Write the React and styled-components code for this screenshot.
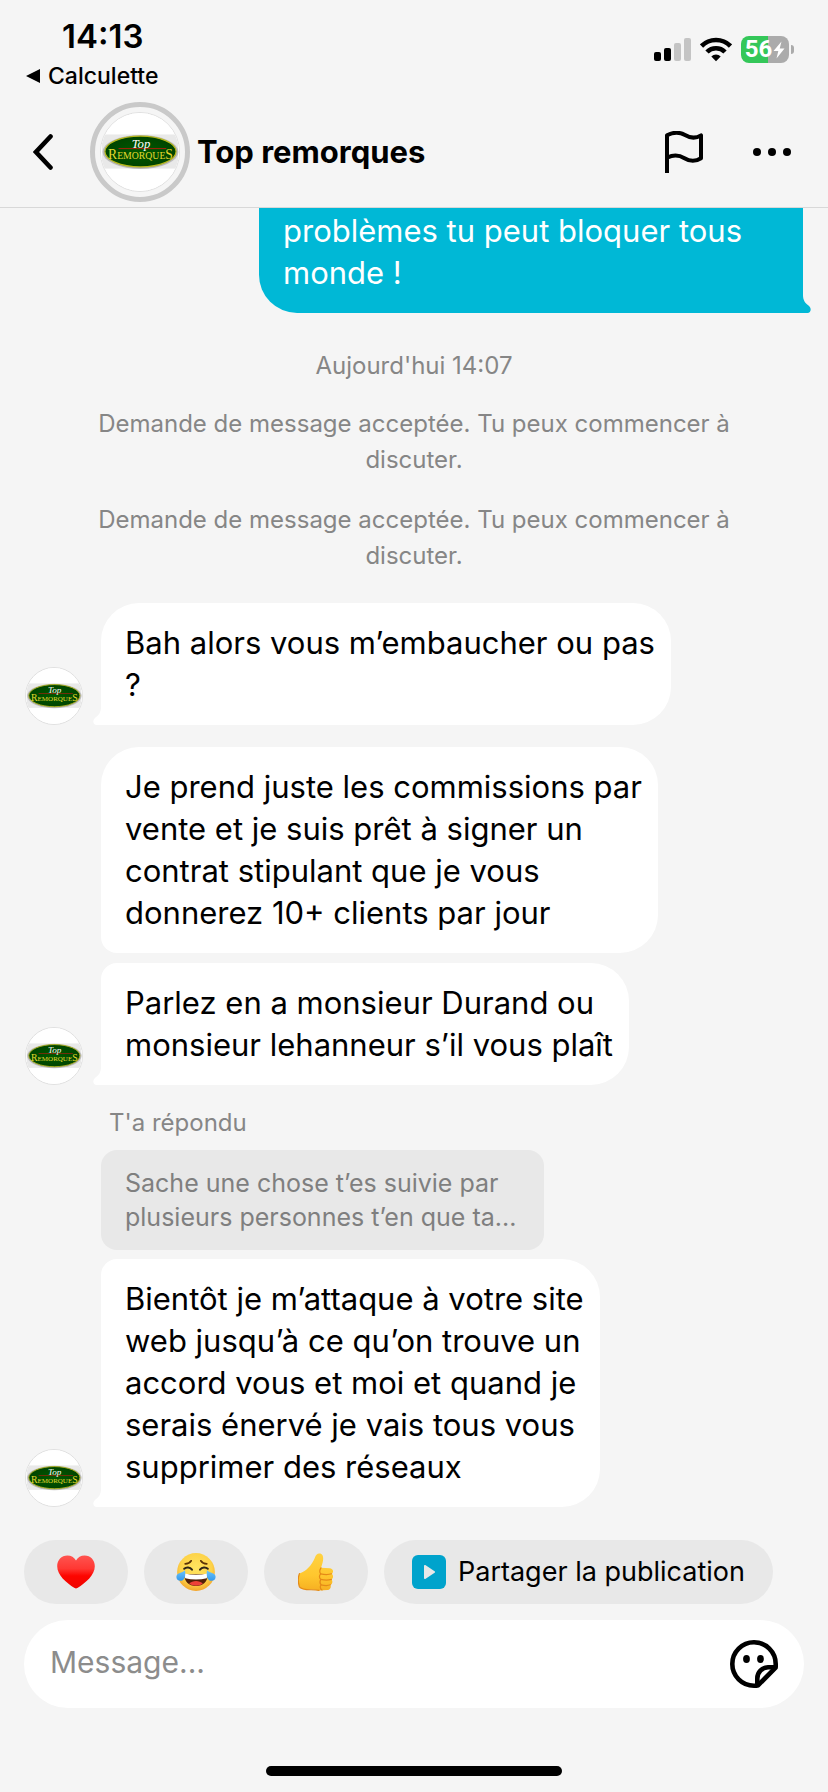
import React from 'react';
import styled, { createGlobalStyle } from 'styled-components';



const messages = [
    {
        id: 1,
        text: 'Bah alors vous m’embaucher ou pas\n?',
        tail: true,
        space: 29,
    },
    {
        id: 2,
        text: 'Je prend juste les commissions par\nvente et je suis prêt à signer un\ncontrat stipulant que je vous\ndonnerez 10+ clients par jour',
        joinBottom: true,
        space: 22,
    },
    {
        id: 3,
        text: 'Parlez en a monsieur Durand ou\nmonsieur lehanneur s’il vous plaît',
        joinTop: true,
        tail: true,
        space: 10,
    },
    {
        id: 4,
        reply: 'Sache une chose t’es suivie par\nplusieurs personnes t’en que ta...',
        text: 'Bientôt je m’attaque à votre site\nweb jusqu’à ce qu’on trouve un\naccord vous et moi et quand je\nserais énervé je vais tous vous\nsupprimer des réseaux',
        joinTop: true,
        tail: true,
        space: 20,
    },
];


const Logo = () => (
    <svg viewBox="0 0 80 80" width="100%" height="100%" role="img" aria-label="Top Remorques">
        <defs>
            <radialGradient id="shade">
                <stop offset="0.7" stopColor="#6f6f6f" />
                <stop offset="1" stopColor="#c4c4c4" />
            </radialGradient>
            <radialGradient id="green">
                <stop offset="0" stopColor="#005a00" />
                <stop offset="1" stopColor="#004400" />
            </radialGradient>
        </defs>
        <rect width="80" height="80" fill="#fff" />
        <rect x="1" y="22" width="78" height="35" fill="#e9e9e9" />
        <ellipse cx="40.5" cy="40" rx="39" ry="17.5" fill="url(#shade)" />
        <ellipse cx="40.5" cy="39.5" rx="36.5" ry="15.8" fill="url(#green)" stroke="#b9b91c" strokeWidth="1.2" />
        <path d="M18 36.5H67" stroke="#a8200d" strokeWidth="1" />
        <text x="41" y="36" textAnchor="middle" fill="#fff" fontFamily="'Liberation Serif', serif" fontStyle="italic" fontSize="13">Top</text>
        <text x="40.5" y="47" textAnchor="middle" fill="#e6d92e" fontFamily="'Liberation Serif', serif" fontSize="10">
            <tspan fontSize="14">R</tspan>EMORQUE<tspan fontSize="14">S</tspan>
        </text>
    </svg>
);

const Tail = () => (
    <svg viewBox="0 0 9 18" width="9" height="18" aria-hidden="true">
        <path d="M8 0C8 5 6 8 2.5 10.5C-1 13 0 18 3.5 18H9V0Z" fill="currentColor" />
    </svg>
);

const WifiIcon = () => (
    <svg viewBox="0 0 32 25" width="32" height="25" aria-hidden="true">
        <g fill="none" stroke="#000" strokeWidth="4.6">
            <path d="M1.5 9A20.5 20.5 0 0 1 30.5 9" />
            <path d="M7 15A12.6 12.6 0 0 1 25 15" />
        </g>
        <path d="M16 24.3L11.3 19.5A6.7 6.7 0 0 1 20.7 19.5Z" fill="#000" />
    </svg>
);

const BoltIcon = () => (
    <svg viewBox="0 0 12 18" width="12" height="18" aria-hidden="true">
        <path d="M8.5 0.5L0.5 10H5.3L3.5 17.5L11.5 7.5H6.7Z" fill="#fff" />
    </svg>
);

const BackIcon = () => (
    <svg viewBox="0 0 20 36" width="20" height="36" aria-hidden="true">
        <path d="M17.5 2.5L3 18L17.5 33.5" fill="none" stroke="#000" strokeWidth="4.6" strokeLinecap="round" />
    </svg>
);

const FlagIcon = () => (
    <svg viewBox="0 0 38 42" width="38" height="42" aria-hidden="true">
        <path d="M2 42V4.2C7 1.7 14 .6 20 4C26 7.6 31 7.4 36 4.4V27.2C31 30.4 25 30.6 19.5 27.2C14 23.8 8 23.6 2.5 26.6" fill="none" stroke="#000" strokeWidth="4" strokeLinejoin="round" />
    </svg>
);

const MoreIcon = () => (
    <svg viewBox="0 0 38 8" width="38" height="8" aria-hidden="true">
        <circle cx="4" cy="4" r="4" />
        <circle cx="19" cy="4" r="4" />
        <circle cx="34" cy="4" r="4" />
    </svg>
);

const HeartEmoji = () => (
    <svg viewBox="0 0 38 34" width="38" height="34" aria-hidden="true">
        <defs>
            <linearGradient id="heart" x1="0" y1="0" x2="0" y2="1">
                <stop offset="0" stopColor="#ff5450" />
                <stop offset="0.4" stopColor="#ff3833" />
                <stop offset="0.62" stopColor="#fd0500" />
                <stop offset="1" stopColor="#ee0500" />
            </linearGradient>
        </defs>
        <path d="M19 5.6C20.6 2.2 24 .4 27.6 .4C33.6 .4 37.8 5 37.8 11.2C37.8 20 29 27.5 20.4 33C19.4 33.6 18.6 33.6 17.6 33C9 27.5 .2 20 .2 11.2C.2 5 4.4 .4 10.4 .4C14 .4 17.4 2.2 19 5.6Z" fill="url(#heart)" />
    </svg>
);

const LaughEmoji = () => (
    <svg viewBox="0 0 40 38" width="40" height="38" aria-hidden="true">
        <defs>
            <radialGradient id="face" cx="0.5" cy="0.4" r="0.6">
                <stop offset="0" stopColor="#ffe561" />
                <stop offset="0.7" stopColor="#fdd247" />
                <stop offset="1" stopColor="#f3a52c" />
            </radialGradient>
            <linearGradient id="tear" x1="0" y1="0" x2="0" y2="1">
                <stop offset="0" stopColor="#6cc4fb" />
                <stop offset="1" stopColor="#3499ec" />
            </linearGradient>
        </defs>
        <circle cx="20" cy="19" r="18.9" fill="url(#face)" />
        <g fill="none" stroke="#5b3206" strokeWidth="1.7" strokeLinecap="round">
            <path d="M9.2 10.8C11.8 10.8 14 9.8 15.2 7.8" />
            <path d="M30.8 10.8C28.2 10.8 26 9.8 24.8 7.8" />
        </g>
        <g fill="none" stroke="#2d2419" strokeWidth="2" strokeLinecap="round">
            <path d="M8.2 15.8C10.2 14 14 14 16 16.6" />
            <path d="M31.8 15.8C29.8 14 26 14 24 16.6" />
        </g>
        <path d="M8.2 21.2H31.8C31.8 28.6 27 33 20 33S8.2 28.6 8.2 21.2Z" fill="#522007" />
        <path d="M8.4 20.6C16 22.2 24 22.2 31.6 20.6L30.8 25.2C24 26.8 16 26.8 9.2 25.2Z" fill="#fff" />
        <path d="M13.2 30.6C16.4 27.2 23.6 27.2 26.8 30.6C23 33.6 17 33.6 13.2 30.6Z" fill="#ee4138" />
        <path d="M9 17.2C9.8 22 9 27.6 4.6 27.8C1.6 28 -.2 25.4 .6 22.8C1.6 19.8 5.6 20 9 17.2Z" fill="url(#tear)" />
        <path d="M31 17.2C30.2 22 31 27.6 35.4 27.8C38.4 28 40.2 25.4 39.4 22.8C38.4 19.8 34.4 20 31 17.2Z" fill="url(#tear)" />
    </svg>
);

const ThumbEmoji = () => (
    <svg viewBox="0 0 36 38" width="36" height="38" aria-hidden="true">
        <defs>
            <linearGradient id="thumb" x1="0" y1="0" x2="0" y2="1">
                <stop offset="0" stopColor="#ffd241" />
                <stop offset="0.6" stopColor="#ffc72e" />
                <stop offset="1" stopColor="#f6b022" />
            </linearGradient>
        </defs>
        <path d="M1.4 20.6C8 18.4 13.4 13 17 4.6C17.6 1.6 19.8 -.2 22.4 .6C26.4 2 25.6 7.8 23 14.8L32 15.2C35.6 15.6 35.8 19.8 33.6 20.8C35.6 22 35.6 25.4 33.4 26.4C35 27.6 34.6 31 32.4 31.8C33.4 33.8 32.4 36.8 29.6 37L21 37.4C14 36 4.4 38.4 1.4 33.8C.2 30 .2 24 1.4 20.6Z" fill="url(#thumb)" />
        <g fill="none" stroke="#e58a17" strokeWidth="1.2" strokeLinecap="round">
            <path d="M23 14.8C21.4 17 21.4 19 22.6 20.8C21.2 22.6 21.4 25 22.8 26.4C21.6 28.4 21.8 30.4 23 31.8C21.8 33.6 22 36 24 37" />
            <path d="M22.6 20.8C26 21.6 31 21.6 33.6 20.8" />
            <path d="M22.8 26.4C26 27.2 30.8 27.2 33.4 26.4" />
            <path d="M23 31.8C26 32.6 30.4 32.6 32.4 31.8" />
            <path d="M1.4 20.6C.2 24 .2 30 1.4 33.8C4.4 38 14 36 21 37.4" />
        </g>
    </svg>
);

const PlayIcon = () => (
    <svg viewBox="0 0 34 34" width="34" height="34" aria-hidden="true">
        <rect width="34" height="34" rx="6" fill="#00a3cc" />
        <path d="M12 10.8C12 10.1 12.7 9.7 13.3 10.1L22.6 16.2C23.2 16.6 23.2 17.4 22.6 17.8L13.3 23.9C12.7 24.3 12 23.9 12 23.2Z" fill="#e8e8e8" />
    </svg>
);

const StickerIcon = () => (
    <svg viewBox="0 0 48 48" width="48" height="48" aria-hidden="true">
        <g fill="none" stroke="#000" strokeWidth="4.6" strokeLinejoin="round">
            <path d="M45.6 27.6C45.8 26.4 45.7 25.2 45.7 24A21.7 21.7 0 1 0 24 45.7C25.4 45.7 26.8 45.9 28 45.4L45.6 27.6Z" />
            <path d="M45.4 27.3H38C32 27.6 27.3 32.4 27.3 38.4V45.2" />
        </g>
        <ellipse cx="16.5" cy="19" rx="3.4" ry="4" />
        <ellipse cx="30.5" cy="19" rx="3.4" ry="4" />
    </svg>
);


const Message = ({ message }) => (
    <MessageRow $space={message.space}>
        <AvatarSlot>
            {message.tail && <Avatar><Logo /></Avatar>}
        </AvatarSlot>
        <MessageBody>
            {message.reply && (
                <>
                    <ReplyLabel>T'a répondu</ReplyLabel>
                    <Quote>{message.reply}</Quote>
                </>
            )}
            <Bubble $tail={message.tail} $joinTop={message.joinTop} $joinBottom={message.joinBottom}>
                {message.text}
                {message.tail && <TailLeft><Tail /></TailLeft>}
            </Bubble>
        </MessageBody>
    </MessageRow>
);


const App = () => {
    return (
        <Page>
            <GlobalStyle />

            <StatusBar>
                <StatusLeft>
                    <Time>14:13</Time>
                    <BackToApp href="#calculette">
                        <svg viewBox="0 0 14 14" width="14" height="14" aria-hidden="true">
                            <path d="M0 7L14 0V14Z" />
                        </svg>
                        Calculette
                    </BackToApp>
                </StatusLeft>
                <StatusRight>
                    <Signal>
                        <SignalBar $height={9} $on />
                        <SignalBar $height={13} $on />
                        <SignalBar $height={18} />
                        <SignalBar $height={23} />
                    </Signal>
                    <WifiIcon />
                    <BatteryWrap>
                        <Battery>56<BoltIcon /></Battery>
                        <BatteryCap />
                    </BatteryWrap>
                </StatusRight>
            </StatusBar>

            <Header>
                <IconButton aria-label="Retour"><BackIcon /></IconButton>
                <Profile href="#profil">
                    <Ring><Avatar><Logo /></Avatar></Ring>
                    <Title>Top remorques</Title>
                </Profile>
                <Actions>
                    <IconButton aria-label="Signaler"><FlagIcon /></IconButton>
                    <IconButton aria-label="Plus"><MoreIcon /></IconButton>
                </Actions>
            </Header>

            <Thread>
                <SentBubble>
                    {'problèmes tu peut bloquer tous\nmonde !'}
                    <TailRight><Tail /></TailRight>
                </SentBubble>

                <Notice $space={35}>Aujourd'hui 14:07</Notice>
                <Notice $space={22}>Demande de message acceptée. Tu peux commencer à discuter.</Notice>
                <Notice $space={24}>Demande de message acceptée. Tu peux commencer à discuter.</Notice>

                {
                    messages.map(message => <Message key={message.id} message={message} />)
                }
            </Thread>

            <QuickReplies>
                <Chip aria-label="Cœur"><HeartEmoji /></Chip>
                <Chip aria-label="Rire"><LaughEmoji /></Chip>
                <Chip aria-label="Pouce levé"><ThumbEmoji /></Chip>
                <Chip $wide><PlayIcon />Partager la publication</Chip>
            </QuickReplies>

            <Composer>
                <Input type="text" placeholder="Message..." aria-label="Message" />
                <IconButton aria-label="Stickers"><StickerIcon /></IconButton>
            </Composer>

            <HomeIndicator />
        </Page>
    );
};

export default App;




const GlobalStyle = createGlobalStyle`
*{
    box-sizing: border-box;
}

body{
    margin: 0;
    background: #f5f5f5;
    color: #000;
    font-family: Inter, "Liberation Sans", sans-serif;
}

svg{
    display: block;
    flex-shrink: 0;
}

a{
    color: inherit;
    text-decoration: none;
}
`;

const Page = styled.div`
display: flex;
flex-direction: column;
min-height: 100vh;
overflow-x: hidden;
`;

const StatusBar = styled.div`
display: flex;
justify-content: space-between;
align-items: flex-start;
padding: 16px 34px 12px 26px;
`;

const StatusLeft = styled.div`
display: flex;
flex-direction: column;
gap: 6px;
`;

const Time = styled.div`
padding-left: 36px;
font-size: 33px;
line-height: 40px;
font-weight: 600;
`;

const BackToApp = styled.a`
display: flex;
align-items: center;
gap: 8px;
font-size: 23px;
line-height: 28px;
font-weight: 500;
`;

const StatusRight = styled.div`
display: flex;
align-items: center;
gap: 9px;
padding-top: 20px;
`;

const Signal = styled.div`
display: flex;
align-items: flex-end;
gap: 3px;
`;

const SignalBar = styled.div`
width: 7px;
height: ${props => props.$height}px;
border-radius: 2px;
background: ${props => props.$on ? '#000' : '#c4c4c4'};
`;

const BatteryWrap = styled.div`
display: flex;
align-items: center;
gap: 2px;
`;

const Battery = styled.div`
display: flex;
align-items: center;
justify-content: center;
gap: 1px;
width: 48px;
height: 27px;
border-radius: 8px;
background: linear-gradient(to right, #34c759 56%, #ababab 56%);
color: #fff;
font-family: Roboto, sans-serif;
font-size: 24px;
line-height: 27px;
font-weight: 700;
`;

const BatteryCap = styled.div`
width: 3px;
height: 9px;
border-radius: 0 4px 4px 0;
background: #ababab;
`;

const Header = styled.header`
display: flex;
align-items: center;
padding: 0 37px 5px 33px;
border-bottom: 1px solid #d8d8d8;
`;

const IconButton = styled.button`
display: flex;
align-items: center;
justify-content: center;
padding: 0;
border: none;
background: none;
color: inherit;
cursor: pointer;
`;

const Profile = styled.a`
display: flex;
align-items: center;
gap: 7px;
margin-left: 37px;
`;

const Ring = styled.div`
width: 100px;
height: 100px;
padding: 5px;
border: 5px solid #c9c9c9;
border-radius: 50%;
`;

const Avatar = styled.div`
width: 100%;
aspect-ratio: 1;
border: 1px solid #e0e0e0;
border-radius: 50%;
overflow: hidden;
background: #fff;
`;

const Title = styled.h1`
margin: 0;
font-size: 31px;
line-height: 40px;
font-weight: 700;
`;

const Actions = styled.div`
display: flex;
align-items: center;
gap: 50px;
margin-left: auto;
`;

const Thread = styled.main`
display: flex;
flex-direction: column;
flex: 1;
padding: 0 25px 33px;
`;

const Bubble = styled.div`
position: relative;
width: fit-content;
padding: 19px 16px 19px 24px;
border-radius: ${props => props.$joinTop ? 16 : 38}px 38px 38px ${props => props.$tail ? 0 : props.$joinBottom ? 16 : 38}px;
background: #fff;
font-size: 31px;
line-height: 42px;
white-space: pre-wrap;
`;

const SentBubble = styled(Bubble)`
align-self: flex-end;
width: 100%;
max-width: 544px;
padding-top: 2px;
border-radius: 0 0 0 38px;
background: #00b8d6;
color: #fff;
`;

const TailLeft = styled.span`
position: absolute;
left: -8px;
bottom: 0;
color: #fff;
`;

const TailRight = styled.span`
position: absolute;
right: -8px;
bottom: 0;
color: #00b8d6;
transform: scaleX(-1);
`;

const Notice = styled.p`
align-self: center;
max-width: 640px;
margin: ${props => props.$space}px 0 0;
color: #868686;
font-size: 24px;
line-height: 36px;
text-align: center;
`;

const MessageRow = styled.div`
display: flex;
align-items: flex-end;
gap: 18px;
margin-top: ${props => props.$space}px;
`;

const AvatarSlot = styled.div`
flex: 0 0 58px;
`;

const MessageBody = styled.div`
display: flex;
flex-direction: column;
align-items: flex-start;
min-width: 0;
`;

const ReplyLabel = styled.div`
padding-left: 8px;
margin-bottom: 9px;
color: #868686;
font-size: 24px;
line-height: 36px;
`;

const Quote = styled.blockquote`
margin: 0 0 9px;
padding: 16px 28px 16px 24px;
border-radius: 16px;
background: #e8e8e8;
color: #7f7f7f;
font-size: 25px;
line-height: 34px;
white-space: pre-wrap;
`;

const QuickReplies = styled.div`
display: flex;
gap: 16px;
padding: 0 24px;
`;

const Chip = styled.button`
display: flex;
align-items: center;
justify-content: center;
gap: 12px;
min-width: 104px;
height: 64px;
padding: ${props => props.$wide ? '0 28px' : '0'};
border: none;
border-radius: 32px;
background: #e8e8e8;
color: #000;
font-family: inherit;
font-size: 27px;
line-height: 36px;
cursor: pointer;
`;

const Composer = styled.div`
display: flex;
align-items: center;
height: 88px;
margin: 16px 24px 58px;
padding: 0 26px;
border-radius: 44px;
background: #fff;
`;

const Input = styled.input`
flex: 1;
min-width: 0;
padding: 0 0 4px;
border: none;
outline: none;
background: none;
color: #000;
font-family: inherit;
font-size: 30px;
line-height: 42px;

&::placeholder{
    color: #8c8c8c;
    opacity: 1;
}
`;

const HomeIndicator = styled.div`
align-self: center;
width: 296px;
height: 10px;
margin-bottom: 16px;
border-radius: 5px;
background: #000;
`;
